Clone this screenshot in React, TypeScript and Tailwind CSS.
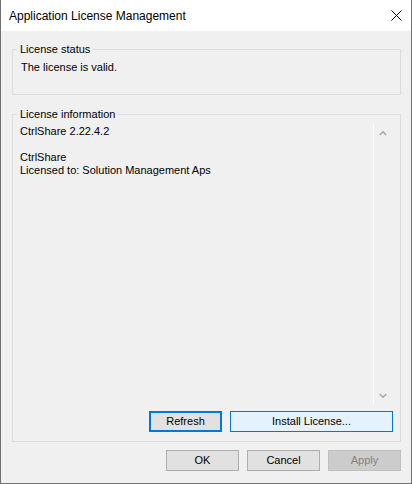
import React from "react";

function CloseIcon() {
  return (
    <svg width="11" height="11" viewBox="0 0 11 11" className="block">
      <path d="M0.5 0.5 L10.5 10.5 M10.5 0.5 L0.5 10.5" stroke="#000" strokeWidth="1" fill="none" />
    </svg>
  );
}

function Chevron({ up }: { up?: boolean }) {
  return (
    <svg width="8" height="6" viewBox="0 0 8 6" className="block">
      <path
        d={up ? "M0.8 5 L4 1.8 L7.2 5" : "M0.8 1 L4 4.2 L7.2 1"}
        stroke="#a6a6a6"
        strokeWidth="1.6"
        fill="none"
      />
    </svg>
  );
}

function DialogButton({
  label,
  variant = "normal",
  width = "w-[73px]",
}: {
  label: string;
  variant?: "normal" | "focused" | "hover" | "disabled";
  width?: string;
}) {
  const styles = {
    normal: "bg-[#e1e1e1] border border-[#adadad] text-black",
    focused: "bg-[#e1e1e1] border-2 border-[#0078d7] text-black",
    hover: "bg-[#e5f1fb] border border-[#0078d7] text-black",
    disabled: "bg-[#cccccc] border border-[#bfbfbf] text-[#838383]",
  };
  return (
    <button
      type="button"
      className={`${width} h-[21px] flex items-center justify-center text-[11px] leading-[13px] ${styles[variant]}`}
    >
      {label}
    </button>
  );
}

export default function App() {
  return (
    <div className="w-[412px] h-[484px] flex flex-col border-x border-b border-[#707070] bg-[#f0f0f0] font-['Liberation_Sans',Arial,sans-serif] text-black">
      {/* title bar */}
      <div className="h-[31px] bg-white flex justify-between items-start">
        <span className="pl-[8px] pt-[8px] text-[12px] leading-[16px]">
          Application License Management
        </span>
        <div className="mt-[10px] mr-[9px]">
          <CloseIcon />
        </div>
      </div>

      <div className="flex flex-col px-[11px] pr-[10px]">
        {/* license status */}
        <fieldset className="mt-[12px] h-[52px] border border-[#dcdcdc]">
          <legend className="ml-[4px] px-[3px] text-[11px] leading-[13px]">License status</legend>
          <p className="mt-[5px] pl-[8px] text-[11px] leading-[13px]">The license is valid.</p>
        </fieldset>

        {/* license information */}
        <fieldset className="mt-[13px] h-[334px] border border-[#dcdcdc] flex flex-col">
          <legend className="ml-[4px] px-[3px] text-[11px] leading-[13px]">License information</legend>
          <div className="mt-[3px] ml-[4px] w-[374px] h-[280px] flex">
            <div className="flex-1 pl-[3px] pt-[1px] text-[11px] leading-[13px]">
              <p>CtrlShare 2.22.4.2</p>
              <p>&nbsp;</p>
              <p>CtrlShare</p>
              <p>Licensed to: Solution Management Aps</p>
            </div>
            <div className="w-[18px] border-l border-white flex flex-col justify-between">
              <div className="h-[17px] flex items-center justify-center">
                <Chevron up />
              </div>
              <div className="h-[17px] flex items-center justify-center">
                <Chevron />
              </div>
            </div>
          </div>
          <div className="mt-[7px] flex justify-end gap-[8px] pr-[7px]">
            <DialogButton label="Refresh" variant="focused" />
            <DialogButton label="Install License..." variant="hover" width="w-[163px]" />
          </div>
        </fieldset>

        {/* dialog buttons */}
        <div className="mt-[8px] flex justify-end gap-[8px]">
          <DialogButton label="OK" />
          <DialogButton label="Cancel" />
          <DialogButton label="Apply" variant="disabled" />
        </div>
      </div>
    </div>
  );
}
